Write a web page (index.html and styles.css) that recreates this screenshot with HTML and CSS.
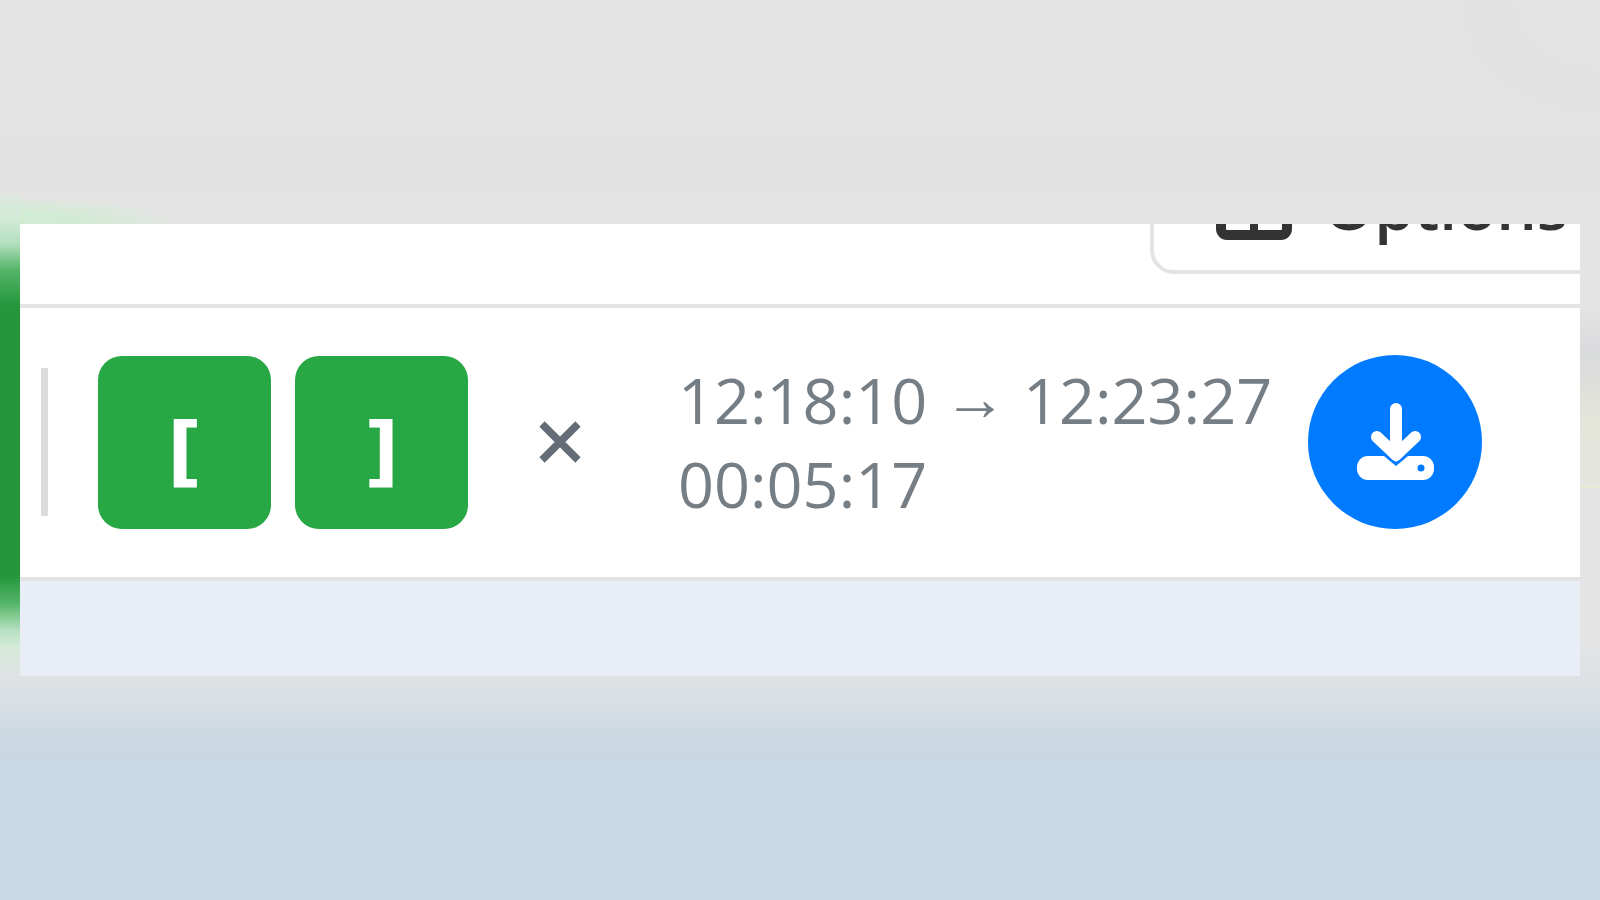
FILE: index.html
```
<!DOCTYPE html>
<html lang="en">
<head>
    <meta charset="UTF-8">
    <meta name="viewport" content="width=device-width, initial-scale=1.0">
    <title>Clip Export</title>
    <link rel="stylesheet" href="styles.css">
</head>
<body>
    <main class="panel">
        <!-- Top bar, scrolled mostly out of view -->
        <header class="topbar">
            <button class="options-btn" type="button">
                <svg class="options-icon" viewBox="0 0 76 68" aria-hidden="true">
                    <rect x="5" y="5" width="66" height="58" rx="6" fill="none" stroke="#333" stroke-width="10"/>
                    <path d="M38 5v58" stroke="#333" stroke-width="8"/>
                </svg>
                <span>Options</span>
            </button>
        </header>

        <!-- Selection controls -->
        <section class="toolbar">
            <div class="divider"></div>
            <div class="markers">
                <button class="marker-btn" type="button">[</button>
                <button class="marker-btn" type="button">]</button>
            </div>
            <button class="clear-btn" type="button" aria-label="Clear">
                <svg viewBox="0 0 44 44" aria-hidden="true">
                    <path d="M4 4L40 40M40 4L4 40" stroke="#646d75" stroke-width="7.5"/>
                </svg>
            </button>
            <div class="times">
                <div>12:18:10 <span class="arrow">→</span> 12:23:27</div>
                <div>00:05:17</div>
            </div>
            <button class="download-btn" type="button" aria-label="Download">
                <svg viewBox="0 0 78 78" aria-hidden="true">
                    <rect x="1" y="53" width="77" height="24" rx="11" fill="#fff"/>
                    <path d="M28 51L40 61L52 51" fill="none" stroke="#007bff" stroke-width="3"/>
                    <path d="M40 6V52M21 34L40 52L59 34" fill="none" stroke="#fff" stroke-width="12" stroke-linecap="round" stroke-linejoin="round"/>
                    <circle cx="65" cy="65" r="3.5" fill="#007bff"/>
                </svg>
            </button>
        </section>

        <div class="timeline"></div>
    </main>
</body>
</html>
```
FILE: styles.css
```
/* General Styling */
* {
    box-sizing: border-box;
}

body {
    margin: 0;
    min-height: 100vh;
    display: flex;
    flex-direction: column;
    justify-content: center;
    padding: 0 20px;
    overflow: hidden;
    font-family: "Open Sans", "Noto Sans", sans-serif;
    /* green edge, its glow, right edge tint, then the page */
    background:
        linear-gradient(transparent 21%, #d5ebda 24%, #b5e0bf 27%, #54b568 30%, #25963c 34%, #25963c 64%, #54b568 67%, #b5e0bf 70%, #d5ebda 72%, transparent 75%) left / 20px 100% no-repeat,
        radial-gradient(180px 30px at 0 25%, #d0ecd2 40%, transparent) no-repeat,
        linear-gradient(transparent 34%, #d9dadc 39%, #e4e5da 47%, #e4e5df 54%, #eeeecb 54%, transparent 54.3%) right / 20px 100% no-repeat,
        radial-gradient(160px 130px at 100% 0, #e4e4e4 40%, #e1e1e1 70%, transparent) no-repeat,
        linear-gradient(#e4e4e4 13%, #e1e1e1 17%, #e1e1e1 20%, #e4e4e4 22%, #e4e4e4 70%, #dfe2e5 75%, #d8dfe3 78%, #cad8e1 82%, #c8d8e4 85%);
}

.panel {
    background: #fff;
    overflow: hidden;
}

button {
    flex: none;
    font-family: inherit;
    border: 0;
    cursor: pointer;
}

svg {
    display: block;
}

/* Top Bar */
.topbar {
    display: flex;
    justify-content: flex-end;
    align-items: flex-end;
    height: 84px;
    padding-bottom: 30px;
    border-bottom: 4px solid #e4e4e4;
}

.options-btn {
    display: flex;
    align-items: center;
    gap: 32px;
    margin-right: -60px;
    padding: 30px 68px 30px 62px;
    font-size: 64px;
    font-weight: 600;
    line-height: 64px;
    color: #333;
    background: #fff;
    border: 4px solid #e4e4e4;
    border-radius: 24px;
}

.options-icon {
    width: 76px;
    height: 68px;
}

/* Toolbar */
.toolbar {
    display: flex;
    align-items: center;
    padding: 47px 98px 48px 21px;
    border-bottom: 4px solid #e2e2e2;
}

.divider {
    width: 7px;
    height: 148px;
    margin-right: 50px;
    background: #dcdcdc;
}

.markers {
    display: flex;
    gap: 24px;
}

.marker-btn {
    width: 173px;
    height: 173px;
    padding: 16px 0 0;
    font-family: "DejaVu Sans", sans-serif;
    font-size: 76px;
    font-weight: bold;
    color: #fff;
    background: #28a745;
    border-radius: 24px;
}

.clear-btn {
    padding: 60px 70px;
    background: none;
}

.clear-btn svg {
    width: 44px;
    height: 44px;
}

.times {
    margin: 0 auto 0 26px;
    font-size: 63px;
    line-height: 84px;
    color: #757d85;
    white-space: nowrap;
}

.arrow {
    font-family: "Liberation Sans", sans-serif;
    line-height: 1;
    vertical-align: 4px;
}

.download-btn {
    display: flex;
    align-items: center;
    justify-content: center;
    width: 174px;
    height: 174px;
    padding: 0;
    background: #007bff;
    border-radius: 50%;
}

.download-btn svg {
    width: 78px;
    height: 78px;
}

/* Timeline */
.timeline {
    height: 95px;
    background: #e9eef6;
}
```
